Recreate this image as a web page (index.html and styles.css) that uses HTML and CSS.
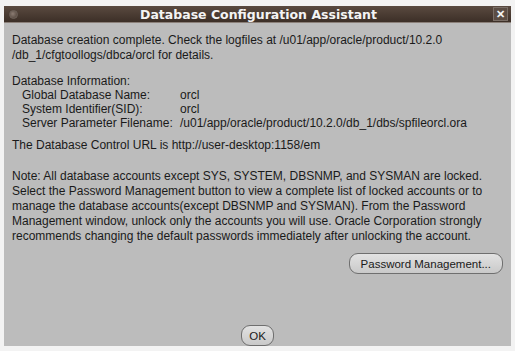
FILE: index.html
```html
<!DOCTYPE html>
<html lang="en">
<head>
    <meta charset="UTF-8">
    <title>Database Configuration Assistant</title>
    <link rel="stylesheet" href="styles.css">
</head>
<body>
    <div class="window">
        <div class="titlebar">
            <span class="win-icon"></span>
            <span class="title">Database Configuration Assistant</span>
            <span class="close">&#x2715;</span>
        </div>

        <div class="content">
            <p>Database creation complete. Check the logfiles at /u01/app/oracle/product/10.2.0<br>/db_1/cfgtoollogs/dbca/orcl for details.</p>

            <div class="info">
                <p>Database Information:</p>
                <div class="info-grid">
                    <span>Global Database Name:</span><span>orcl</span>
                    <span>System Identifier(SID):</span><span>orcl</span>
                    <span>Server Parameter Filename:</span><span>/u01/app/oracle/product/10.2.0/db_1/dbs/spfileorcl.ora</span>
                </div>
            </div>

            <p>The Database Control URL is http://user-desktop:1158/em</p>

            <p class="note">Note: All database accounts except SYS, SYSTEM, DBSNMP, and SYSMAN are locked.<br>Select the Password Management button to view a complete list of locked accounts or to<br>manage the database accounts(except DBSNMP and SYSMAN). From the Password<br>Management window, unlock only the accounts you will use. Oracle Corporation strongly<br>recommends changing the default passwords immediately after unlocking the account.</p>

            <div class="actions">
                <button class="btn">Password Management...</button>
            </div>
        </div>

        <div class="footer">
            <button class="btn ok">OK</button>
        </div>
    </div>
</body>
</html>
```

FILE: styles.css
```css
* {
    margin: 0;
    padding: 0;
    box-sizing: border-box;
}

body {
    background-color: #f3f3f3;
    font-family: "Liberation Sans", Arial, sans-serif;
}

.window {
    margin: 6px 0 0 4px;
    width: 507px;
    height: 340px;
    background-color: #bcbcbc;
    display: flex;
    flex-direction: column;
    overflow: hidden;
}

.titlebar {
    height: 17px;
    background: linear-gradient(#5a4a40, #3c2f27);
    display: flex;
    align-items: center;
    padding: 0 3px 0 5px;
    border-bottom: 1px solid #8b8079;
}

.win-icon {
    width: 9px;
    height: 9px;
    border-radius: 50%;
    background: radial-gradient(circle at 40% 40%, #8c7d74, #4a3c33);
    border: 1px solid #6e625a;
}

.title {
    flex: 1;
    text-align: center;
    color: #f4f4f4;
    font-family: "DejaVu Sans", sans-serif;
    font-weight: bold;
    font-size: 12.5px;
    padding-left: 6px;
}

.close {
    width: 15px;
    height: 14px;
    background-color: #5b4d44;
    border: 1px solid #7a6e66;
    color: #f4f4f4;
    font-size: 11px;
    font-weight: bold;
    display: flex;
    align-items: center;
    justify-content: center;
}

.content {
    flex: 1;
    padding: 10px 8px 0 8px;
    color: #1a1a1a;
    font-size: 12px;
    line-height: 15px;
}

.content p {
    margin-bottom: 8px;
}

.info {
    line-height: 14px;
    margin-top: 11px;
}

.info p {
    margin-bottom: 0;
}

.info-grid {
    display: grid;
    grid-template-columns: 158px auto;
    padding-left: 10px;
    margin-bottom: 8px;
}

.content p.note {
    margin-top: 16px;
    margin-bottom: 0;
}

.actions {
    display: flex;
    justify-content: flex-end;
    margin-top: 9px;
}

.btn {
    font-family: "Liberation Sans", Arial, sans-serif;
    font-size: 11.5px;
    color: #1a1a1a;
    background: linear-gradient(#e2e2e2, #c9c9c9);
    border: 1px solid #6f6f6f;
    border-radius: 9px;
    height: 21px;
    padding: 0 11px;
}

.footer {
    display: flex;
    justify-content: center;
    height: 21px;
}

.ok {
    width: 33px;
    padding: 0;
}
```
